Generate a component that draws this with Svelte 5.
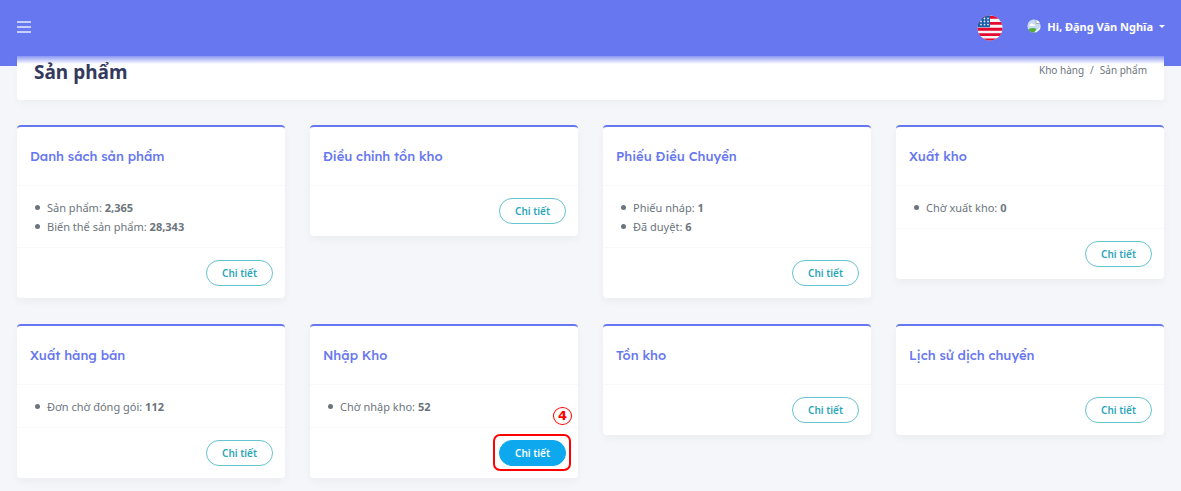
<script>
  const cards = [
    { title: 'Danh sách sản phẩm', items: [['Sản phẩm', '2,365'], ['Biến thể sản phẩm', '28,343']] },
    { title: 'Điều chỉnh tồn kho', items: [] },
    { title: 'Phiếu Điều Chuyển', items: [['Phiếu nháp', '1'], ['Đã duyệt', '6']] },
    { title: 'Xuất kho', items: [['Chờ xuất kho', '0']] },
    { title: 'Xuất hàng bán', items: [['Đơn chờ đóng gói', '112']] },
    { title: 'Nhập Kho', items: [['Chờ nhập kho', '52']], step: '4' },
    { title: 'Tồn kho', items: [] },
    { title: 'Lịch sử dịch chuyển', items: [] }
  ];
</script>

<div class="page">
  <header class="navbar">
    <button class="menu" aria-label="Menu">
      <svg width="14" height="12" viewBox="0 0 14 12" aria-hidden="true">
        <path d="M0 1h14M0 6h14M0 11h14" stroke="#e9ebfd" stroke-width="1.3" />
      </svg>
    </button>
    <div class="tools">
      <button class="flag" aria-label="English">
        <svg width="26" height="26" viewBox="0 0 26 26" aria-hidden="true">
          <defs><clipPath id="disc"><circle cx="13" cy="13" r="12.5" /></clipPath></defs>
          <g clip-path="url(#disc)">
            <path fill="#f6f3f5" d="M0 0h26v26H0z" />
            <path stroke="#e5092f" stroke-width="2.9" d="M0 2.2h26M0 8.400h26M0 14.2h26M0 19.600h26M0 25h26" />
            <path fill="#1c5cab" d="M0 0h13v12.2H0z" />
            <g fill="#dfe9f6">
              <circle cx="4" cy="6.500" r=".9" /><circle cx="7.500" cy="3.500" r=".9" /><circle cx="11" cy="3.500" r=".9" />
              <circle cx="7.500" cy="6.500" r=".9" /><circle cx="11" cy="6.500" r=".9" />
              <circle cx="4" cy="9.600" r=".9" /><circle cx="7.500" cy="9.600" r=".9" /><circle cx="11" cy="9.600" r=".9" />
            </g>
          </g>
        </svg>
      </button>
      <button class="user">
        <svg width="14" height="14" viewBox="0 0 14 14" aria-hidden="true">
          <defs><clipPath id="avatar"><circle cx="7" cy="7" r="6.6" /></clipPath></defs>
          <g clip-path="url(#avatar)">
            <path fill="#c9dbf3" d="M0 0h14v14H0z" />
            <path fill="#fff" d="M2.5 6.5a2 2 0 0 1 3.2-1.5 1.8 1.8 0 0 1 2.2 2H2.5z" />
            <path fill="#fbfbfb" stroke="#9aa0a8" stroke-width=".8" d="M9 0v4.5h5" />
            <path fill="#53ac3b" d="M0 14v-2.5C3 8.6 6 8.5 9.5 9.8L7 14z" />
            <path fill="#fff" d="M14 7.5 8 13l1.500 1 4.500-4z" />
            <path fill="#6777ef" d="m14 9.5-5.5 4.5H14z" />
          </g>
        </svg>
        <span>Hi, Đặng Văn Nghĩa</span>
        <i class="caret"></i>
      </button>
    </div>
  </header>

  <main>
    <section class="heading">
      <h1>Sản phẩm</h1>
      <nav aria-label="Breadcrumb">
        <a href="#kho">Kho hàng</a><span>/</span><span>Sản phẩm</span>
      </nav>
    </section>

    <div class="grid">
      {#each cards as card}
        <article class="card">
          <h2>{card.title}</h2>
          {#if card.items.length}
            <ul>
              {#each card.items as [label, value]}
                <li><span>{label}: <b>{value}</b></span></li>
              {/each}
            </ul>
          {/if}
          <footer>
            <div class="action">
              <button class="detail" class:active={card.step}>Chi tiết</button>
              {#if card.step}
                <span class="marker"></span>
                <span class="step">{card.step}</span>
              {/if}
            </div>
          </footer>
        </article>
      {/each}
    </div>
  </main>
</div>

<style>
  :global(body) {
    margin: 0;
    background: #f4f6f9;
  }
  .page {
    font-family: 'Noto Sans', 'Open Sans', sans-serif;
    font-size: 11px;
    color: #6c757d;
    background: linear-gradient(#6777ef 66px, transparent 66px);
    padding-bottom: 13px;
  }
  button {
    font-family: inherit;
    cursor: pointer;
  }
  .navbar {
    height: 56px;
    box-sizing: border-box;
    display: flex;
    align-items: center;
    justify-content: space-between;
    padding: 0 16px 0 17px;
  }
  .menu, .flag, .user {
    display: flex;
    align-items: center;
    padding: 0;
    border: 0;
    background: none;
  }
  .menu { padding-bottom: 2px; }
  .tools {
    display: flex;
    align-items: center;
    gap: 24px;
  }
  .user {
    color: #fff;
    font-size: 11px;
    font-weight: 700;
    gap: 6px;
    padding-bottom: 4px;
  }
  .caret {
    border: 3px solid transparent;
    border-top-color: #fff;
    border-bottom: 0;
  }
  main { padding: 0 17px; }
  .heading {
    height: 44px;
    box-sizing: border-box;
    display: flex;
    justify-content: space-between;
    align-items: flex-start;
    padding: 0 17px;
    border-radius: 0 0 3px 3px;
    background: linear-gradient(#8a97f3, #fff 8px);
    box-shadow: 0 4px 8px rgba(0, 0, 0, 0.03);
    margin-bottom: 25px;
  }
  h1 {
    margin: 0;
    font-size: 19px;
    line-height: 32px;
    font-weight: 700;
    color: #34395e;
  }
  nav {
    display: flex;
    gap: 6px;
    font-size: 10px;
    line-height: 28px;
  }
  nav a {
    color: inherit;
    text-decoration: none;
  }
  .grid {
    display: grid;
    grid-template-columns: repeat(4, 1fr);
    gap: 26px 25px;
    align-items: start;
  }
  .card {
    background: #fff;
    border-radius: 4px;
    border-top: 2px solid #6777ef;
    box-shadow: 0 4px 8px rgba(0, 0, 0, 0.04);
  }
  h2 {
    margin: 0;
    padding: 0 13px;
    font-family: Lexend, Lato, sans-serif;
    font-size: 13px;
    line-height: 58px;
    font-weight: 500;
    color: #6777ef;
  }
  ul {
    list-style: none;
    margin: 0;
    padding: 12px 13px 11px 18px;
    border-top: 1px solid #f9f9f9;
    line-height: 19px;
  }
  li {
    display: flex;
    align-items: center;
    gap: 7px;
  }
  li::before {
    content: '';
    width: 5px;
    height: 5px;
    border-radius: 50%;
    background: currentColor;
  }
  b { line-height: 18px; }
  footer {
    display: flex;
    justify-content: flex-end;
    padding: 12px;
    border-top: 1px solid #f9f9f9;
  }
  .action {
    position: relative;
    display: flex;
  }
  .detail {
    padding: 0 15px;
    border: 1px solid #66c3d0;
    border-radius: 13px;
    background: transparent;
    color: #2ba6b9;
    font-size: 10px;
    line-height: 24px;
    font-weight: 600;
  }
  .active {
    background: #0da8ee;
    border-color: #0da8ee;
    color: #fff;
  }
  .marker {
    position: absolute;
    inset: -6px -5px -5px -6px;
    border: 2px solid #f00;
    border-radius: 7px;
    pointer-events: none;
  }
  .step {
    position: absolute;
    right: -6px;
    top: -33px;
    width: 17px;
    height: 16px;
    border: 1px solid #f00;
    border-radius: 50%;
    color: #f00;
    font-family: 'DejaVu Sans', sans-serif;
    font-size: 13px;
    line-height: 16px;
    font-weight: 700;
    text-align: center;
  }
</style>
